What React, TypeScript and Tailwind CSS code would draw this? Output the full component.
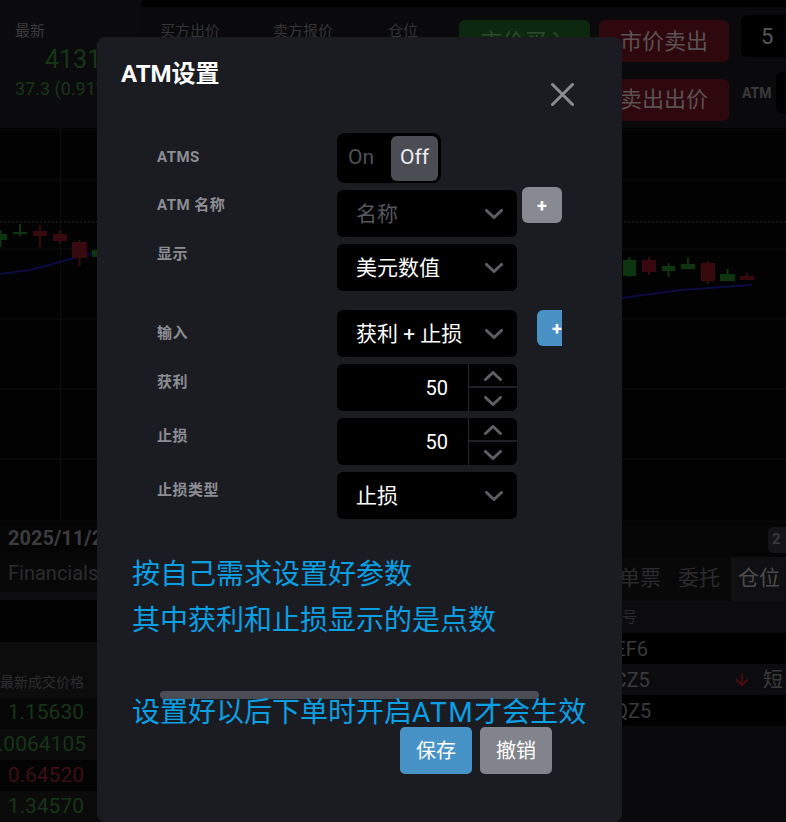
import React from "react";
import { ArrowDown } from "lucide-react";

function Chevron({ up = false }: { up?: boolean }) {
  return (
    <svg width="18" height="10" viewBox="0 0 18 10" className="shrink-0">
      <polyline
        points={up ? "1.5,8.5 9,1.5 16.5,8.5" : "1.5,1.5 9,8.5 16.5,1.5"}
        fill="none"
        stroke="#5d5f65"
        strokeWidth="3"
        strokeLinecap="round"
        strokeLinejoin="round"
      />
    </svg>
  );
}

type Candle = [number, number, number, number, number, number, "g" | "r"];

// x, width, body top, body bottom, wick top, wick bottom, colour
const candles: Candle[] = [
  [-6, 13, 234, 240, 230, 247, "g"],
  [13, 14, 232, 234, 224, 236, "g"],
  [33, 14, 231, 236, 225, 247, "r"],
  [53, 14, 234, 241, 230, 244, "r"],
  [72, 15, 242, 258, 240, 266, "r"],
  [92, 14, 250, 257, 247, 259, "g"],
  [623, 13, 260, 276, 257, 277, "g"],
  [642, 14, 260, 272, 257, 275, "r"],
  [662, 13, 266, 271, 263, 277, "g"],
  [681, 14, 264, 269, 258, 269, "g"],
  [701, 14, 263, 281, 261, 284, "r"],
  [720, 15, 274, 281, 269, 281, "g"],
  [740, 14, 276, 280, 273, 280, "r"],
];

function PriceChart() {
  const grid = [130, 180, 249, 319, 389, 459, 521];
  return (
    <svg width="786" height="394" viewBox="0 128 786 394" className="block">
      <rect x="0" y="128" width="786" height="394" fill="#020203" />
      {grid.map((y) => (
        <line key={y} x1="0" x2="786" y1={y} y2={y} stroke="#0c0c0e" strokeWidth="1" />
      ))}
      <line x1="60.5" x2="60.5" y1="128" y2="522" stroke="#0b0b0d" strokeWidth="1" />
      <line x1="0" x2="786" y1="222" y2="222" stroke="#262628" strokeWidth="1" strokeDasharray="2 2" />
      <polyline
        points="0,274 30,270 60,262 97,252 200,250 350,265 500,290 622,298 680,290 752,285"
        fill="none"
        stroke="#0c0c44"
        strokeWidth="2"
      />
      {candles.map(([x, w, bt, bb, wt, wb, c], i) => {
        const col = c === "g" ? "#0d3610" : "#380a0f";
        return (
          <g key={i}>
            <line x1={x + w / 2} x2={x + w / 2} y1={wt} y2={wb} stroke={col} strokeWidth="2" />
            <rect x={x} y={bt} width={w} height={Math.max(bb - bt, 2)} fill={col} />
          </g>
        );
      })}
    </svg>
  );
}

function FieldRow({
  label,
  labelClass,
  rowClass,
  children,
}: {
  label: string;
  labelClass: string;
  rowClass: string;
  children: React.ReactNode;
}) {
  return (
    <div className={`flex items-start ${rowClass}`}>
      <div
        className={`w-[180px] shrink-0 text-[15px] font-bold leading-[20px] tracking-[0.5px] text-[#8b8d93] ${labelClass}`}
      >
        {label}
      </div>
      {children}
    </div>
  );
}

function SelectBox({ value, placeholder = false }: { value: string; placeholder?: boolean }) {
  return (
    <div className="flex h-[47px] w-[180px] shrink-0 items-center justify-between rounded-[6px] bg-black pl-[19px] pr-[14px]">
      <span className={`text-[21px] leading-[28px] ${placeholder ? "text-[#55575d]" : "text-white"}`}>
        {value}
      </span>
      <Chevron />
    </div>
  );
}

function NumberBox({ value }: { value: string }) {
  return (
    <div className="flex h-[47px] w-[180px] shrink-0 overflow-hidden rounded-[6px] bg-black">
      <div className="flex flex-1 items-center justify-end pr-[20px] text-[20px] text-white">{value}</div>
      <div className="flex w-[49px] flex-col border-l border-[#26272c]">
        <div className="flex flex-1 items-center justify-center pt-[1px]">
          <Chevron up />
        </div>
        <div className="h-[2px] bg-[#1f2025]" />
        <div className="flex flex-1 items-center justify-center pt-[2px]">
          <Chevron />
        </div>
      </div>
    </div>
  );
}

function AtmDialog() {
  return (
    <div className="absolute left-[97px] top-[37px] h-[785px] w-[525px] rounded-[8px] bg-[#1b1c21]">
      <div className="flex items-start justify-between pl-[24px] pr-[48px] pt-[21px]">
        <h2 className="text-[24px] font-bold leading-[32px] text-white">ATM设置</h2>
        <svg width="23" height="23" viewBox="0 0 23 23" className="mt-[25px]">
          <path d="M1.5 1.5 L21.5 21.5 M21.5 1.5 L1.5 21.5" stroke="#8b8c91" strokeWidth="3" strokeLinecap="round" />
        </svg>
      </div>

      <div className="ml-[60px] mt-[27px] w-[405px] overflow-hidden">
        <FieldRow label="ATMS" labelClass="pt-[14px]" rowClass="">
          <div className="flex h-[50px] w-[104px] items-center rounded-[8px] bg-black pl-[11px] pr-[3px]">
            <span className="text-[21px] text-[#4f5158]">On</span>
            <span className="ml-auto flex h-[45px] w-[47px] items-center justify-center rounded-[6px] bg-[#4b4d55] text-[21px] text-[#ececee]">
              Off
            </span>
          </div>
        </FieldRow>

        <FieldRow label="ATM 名称" labelClass="pt-[5px]" rowClass="mt-[7px]">
          <SelectBox value="名称" placeholder />
          <div className="-mt-[3px] ml-[5px] flex h-[36px] w-[40px] shrink-0 items-center justify-center rounded-[6px] bg-[#878a91] text-[18px] font-bold text-white">
            +
          </div>
        </FieldRow>

        <FieldRow label="显示" labelClass="pt-0" rowClass="mt-[7px]">
          <SelectBox value="美元数值" />
        </FieldRow>

        <FieldRow label="输入" labelClass="pt-[13px]" rowClass="mt-[19px]">
          <SelectBox value="获利 + 止损" />
          <div className="ml-[20px] flex h-[36px] w-[40px] shrink-0 items-center justify-center rounded-[6px] bg-[#4a91c6] text-[18px] font-bold text-white">
            +
          </div>
        </FieldRow>

        <FieldRow label="获利" labelClass="pt-[8px]" rowClass="mt-[7px]">
          <NumberBox value="50" />
        </FieldRow>

        <FieldRow label="止损" labelClass="pt-[8px]" rowClass="mt-[7px]">
          <NumberBox value="50" />
        </FieldRow>

        <FieldRow label="止损类型" labelClass="pt-[8px]" rowClass="mt-[7px]">
          <SelectBox value="止损" />
        </FieldRow>
      </div>

      <div className="absolute left-[63px] top-[654px] h-[8px] w-[379px] rounded-full bg-[#4a4d54]" />

      <div className="relative z-10 mt-[33px] h-[175px] pl-[35px] text-[28px] leading-[46px] text-[#0b9fe4]">
        <p>按自己需求设置好参数</p>
        <p>其中获利和止损显示的是点数</p>
        <div className="h-[46px]" />
        <p className="whitespace-nowrap">
          设置好以后下单时开启<span className="tracking-[1.5px]">ATM</span>才会生效
        </p>
      </div>

      <div className="flex justify-end gap-[8px] pr-[70px]">
        <button className="flex h-[47px] w-[72px] items-center justify-center rounded-[5px] bg-[#4792c6] text-[20px] text-white">
          保存
        </button>
        <button className="flex h-[47px] w-[72px] items-center justify-center rounded-[5px] bg-[#82848b] text-[20px] text-white">
          撤销
        </button>
      </div>
    </div>
  );
}

function QuoteHeader() {
  return (
    <div className="flex h-[128px] overflow-hidden">
      <div className="flex w-[142px] shrink-0 flex-col overflow-hidden bg-[#0b0b0d] pl-[15px] pt-[21px]">
        <span className="text-[15px] leading-[20px] text-[#3a3a3c]">最新</span>
        <span className="ml-[30px] mt-[2px] whitespace-nowrap text-[25px] leading-[34px] text-[#163618]">41311</span>
        <span className="whitespace-nowrap text-[18px] leading-[24px] text-[#173619]">37.3 (0.91%)</span>
      </div>
      <div className="flex w-[644px] shrink-0 flex-col">
        <div className="h-[7px] bg-black" />
        <div className="flex flex-1 bg-[#0a0a0c]">
          <div className="flex w-[317px] shrink-0 pl-[18px] pt-[14px] text-[15px] leading-[20px] text-[#353537]">
            <span className="w-[113px]">买方出价</span>
            <span className="w-[115px]">卖方报价</span>
            <span>仓位</span>
          </div>
          <div className="grid shrink-0 grid-cols-[131px_130px] gap-[9px] pt-[13px]">
            <div className="flex h-[42px] items-center justify-center rounded-[6px] bg-[#0c280f] text-[22px] text-[#2d4a2f]">市价买入</div>
            <div className="flex h-[42px] items-center justify-center rounded-[6px] bg-[#2e080c] text-[22px] text-[#5a5255]">市价卖出</div>
            <div className="flex h-[42px] items-center justify-center rounded-[6px] bg-[#0c280f] text-[22px] text-[#2d4a2f]">买入出价</div>
            <div className="flex h-[42px] items-center justify-center rounded-[6px] bg-[#2e080c] text-[22px] text-[#5a5255]">卖出出价</div>
          </div>
          <div className="ml-[12px] flex shrink-0 flex-col pt-[8px]">
            <div className="flex h-[42px] w-[60px] items-center rounded-[6px] bg-black pl-[20px] text-[22px] text-[#58585a]">5</div>
            <div className="mt-[15px] flex h-[41px] items-center pl-[1px]">
              <span className="w-[34px] pt-[2px] text-[14px] font-bold text-[#3a3a3c]">ATM</span>
              <div className="h-[41px] w-[40px] rounded-[6px] bg-black" />
            </div>
          </div>
        </div>
      </div>
    </div>
  );
}

function LowerPanels() {
  return (
    <div className="flex h-[300px]">
      <div className="flex w-[600px] shrink-0 flex-col overflow-hidden">
        <div className="flex h-[35px] items-center bg-[#050505] pl-[8px] text-[20px] font-bold text-[#3c3c3e]">
          <span className="whitespace-nowrap">2025/11/24 09:30</span>
        </div>
        <div className="flex h-[44px] items-center bg-[#080808] pl-[8px] text-[20px] text-[#2c2c2e]">Financials</div>
        <div className="h-[8px] bg-[#0e0e10]" />
        <div className="h-[48px] bg-[#020202]" />
        <div className="flex h-[61px] items-end bg-[#0c0c0c] pb-[6px]">
          <span className="-ml-[16px] w-[100px] shrink-0 whitespace-nowrap text-right text-[14px] leading-[20px] text-[#2e2e30]">
            最新成交价格
          </span>
        </div>
        <div className="flex h-[31px] items-center bg-[#070707]">
          <span className="w-[84px] shrink-0 text-right text-[21px] text-[#163518]">1.15630</span>
        </div>
        <div className="flex h-[33px] items-center bg-[#0b0b0b]">
          <span className="-ml-[30px] w-[116px] shrink-0 whitespace-nowrap text-right text-[21px] text-[#163518]">1.0064105</span>
        </div>
        <div className="flex h-[31px] items-center bg-[#040404]">
          <span className="w-[84px] shrink-0 text-right text-[21px] text-[#3d0f12]">0.64520</span>
        </div>
        <div className="flex h-[31px] items-center bg-[#0b0b0b]">
          <span className="w-[84px] shrink-0 text-right text-[21px] text-[#163518]">1.34570</span>
        </div>
      </div>

      <div className="flex w-[186px] shrink-0 flex-col overflow-hidden">
        <div className="flex h-[35px] items-center bg-[#050505] pl-[168px]">
          <div className="flex h-[26px] w-[40px] shrink-0 items-center rounded-[5px] bg-[#151517] pl-[4px] text-[15px] font-bold text-[#3a3a3c]">
            2
          </div>
        </div>
        <div className="flex h-[44px] items-center bg-[#080808] text-[21px] text-[#2b2b2d]">
          <span className="ml-[19px] whitespace-nowrap">单票</span>
          <span className="ml-[17px] whitespace-nowrap">委托</span>
          <span className="ml-[11px] flex h-full items-center whitespace-nowrap bg-[#101012] px-[7px] text-[#4b4b4d]">仓位</span>
        </div>
        <div className="flex h-[32px] items-center bg-[#0c0c0e] pl-[7px] text-[15px] text-[#2b2b2d]">编号</div>
        <div className="flex h-[31px] items-center bg-black">
          <span className="w-[48px] shrink-0 text-right text-[20px] text-[#3a3a3c]">6EF6</span>
        </div>
        <div className="flex h-[31px] items-center bg-[#0c0c0e]">
          <span className="w-[49px] shrink-0 text-right text-[20px] text-[#3a3a3c]">GCZ5</span>
          <ArrowDown size={18} strokeWidth={2.5} color="#4a0d12" className="ml-[84px] shrink-0" />
          <span className="ml-[12px] text-[20px] text-[#3a3a3c]">短</span>
        </div>
        <div className="flex h-[31px] items-center bg-black">
          <span className="w-[50px] shrink-0 whitespace-nowrap text-right text-[20px] text-[#3a3a3c]">NQZ5</span>
        </div>
        <div className="flex-1 bg-[#0a0a0c]" />
      </div>
    </div>
  );
}

export default function App() {
  return (
    <div className="relative h-[822px] w-[786px] overflow-hidden bg-black font-[family-name:Roboto,'Noto_Sans_CJK_SC',sans-serif]">
      <QuoteHeader />
      <PriceChart />
      <LowerPanels />
      <AtmDialog />
    </div>
  );
}
